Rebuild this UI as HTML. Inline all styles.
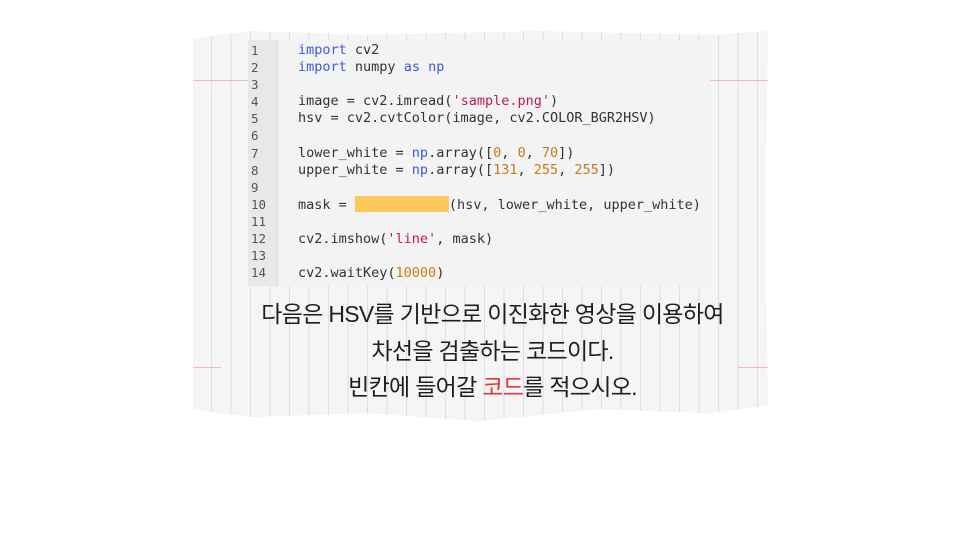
<!DOCTYPE html>
<html><head><meta charset="utf-8"><style>
body{margin:0;width:960px;height:540px;background:#fff;position:relative;overflow:hidden;font-family:"Liberation Sans","Noto Sans CJK KR",sans-serif}
.paper{position:absolute;left:193px;top:31px;width:575px;height:390px;background:#f5f5f6;
background-image:repeating-linear-gradient(90deg,transparent 0 18px,#d6dfeb 18px 19px,transparent 19px 19.5px);
clip-path:polygon(0 2%,10% 0,30% 1%,60% 0,90% 1%,100% 0,99.5% 50%,100% 96%,90% 98%,70% 97%,50% 100%,30% 98%,10% 99%,0 97%);}
.pink{position:absolute;height:1px;background:#f0b8c8}
.code{position:absolute;left:248px;top:40px;width:462px;height:246px;background:#f3f3f3}
.gut{position:absolute;left:248px;top:40px;width:29px;height:246px;background:#e8e8e8;border-right:1px solid #ddd}
.ln,.src{position:absolute;top:42px;font-family:"DejaVu Sans Mono","Liberation Mono",monospace;font-size:13.5px;line-height:17.1px;color:#333;white-space:pre}
.ln{left:251px;color:#555;font-size:12.5px}
.src{left:298px}
.k{color:#3b5bdb}.s{color:#c2185b}.n{color:#c77a1a}
.hl{display:inline-block;width:94px;height:16px;background:#fec85a;vertical-align:-3px}
.q{position:absolute;left:205px;width:575px;text-align:center;font-size:23px;color:#1e1e1e;letter-spacing:-0.7px}
</style></head><body>
<div class="paper"></div>
<div class="pink" style="left:193px;top:80px;width:55px"></div>
<div class="pink" style="left:710px;top:80px;width:58px"></div>
<div class="pink" style="left:193px;top:367px;width:28px"></div>
<div class="pink" style="left:738px;top:367px;width:30px"></div>
<div class="code"></div><div class="gut"></div>
<div class="ln">1
2
3
4
5
6
7
8
9
10
11
12
13
14</div>
<div class="src"><span class="k">import</span> cv2
<span class="k">import</span> numpy <span class="k">as</span> <span class="k">np</span>

image = cv2.imread(<span class="s">'sample.png'</span>)
hsv = cv2.cvtColor(image, cv2.COLOR_BGR2HSV)

lower_white = <span class="k">np</span>.array([<span class="n">0</span>, <span class="n">0</span>, <span class="n">70</span>])
upper_white = <span class="k">np</span>.array([<span class="n">131</span>, <span class="n">255</span>, <span class="n">255</span>])

mask = <span class="hl"></span>(hsv, lower_white, upper_white)

cv2.imshow(<span class="s">'line'</span>, mask)

cv2.waitKey(<span class="n">10000</span>)</div>
<div class="q" style="top:295px">다음은 HSV를 기반으로 이진화한 영상을 이용하여</div>
<div class="q" style="top:332px">차선을 검출하는 코드이다.</div>
<div class="q" style="top:368px">빈칸에 들어갈 <span style="color:#e53935">코드</span>를 적으시오.</div>
</body></html>
